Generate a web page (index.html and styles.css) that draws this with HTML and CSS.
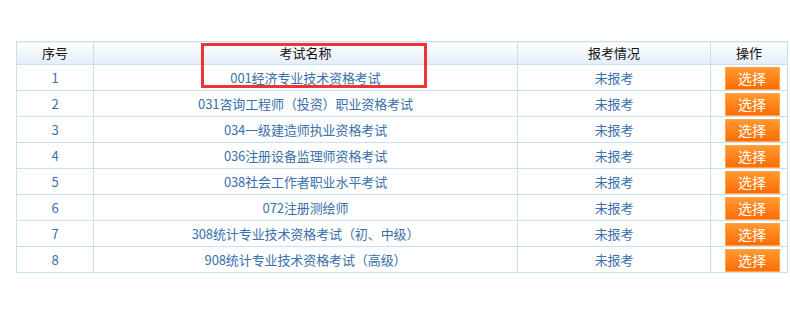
FILE: index.html
```html
<!DOCTYPE html>
<html lang="zh-CN">
<head>
<meta charset="utf-8">
<title>考试列表</title>
<link rel="stylesheet" href="styles.css">
</head>
<body>
<div class="wrap">
  <table class="exam-table">
    <colgroup>
      <col class="c1"><col class="c2"><col class="c3"><col class="c4">
    </colgroup>
    <thead>
      <tr><th>序号</th><th>考试名称</th><th>报考情况</th><th>操作</th></tr>
    </thead>
    <tbody>
      <tr><td>1</td><td>001经济专业技术资格考试</td><td>未报考</td><td class="act"><span class="btn">选择</span></td></tr>
      <tr><td>2</td><td>031咨询工程师（投资）职业资格考试</td><td>未报考</td><td class="act"><span class="btn">选择</span></td></tr>
      <tr><td>3</td><td>034一级建造师执业资格考试</td><td>未报考</td><td class="act"><span class="btn">选择</span></td></tr>
      <tr><td>4</td><td>036注册设备监理师资格考试</td><td>未报考</td><td class="act"><span class="btn">选择</span></td></tr>
      <tr><td>5</td><td>038社会工作者职业水平考试</td><td>未报考</td><td class="act"><span class="btn">选择</span></td></tr>
      <tr><td>6</td><td>072注册测绘师</td><td>未报考</td><td class="act"><span class="btn">选择</span></td></tr>
      <tr><td>7</td><td>308统计专业技术资格考试（初、中级）</td><td>未报考</td><td class="act"><span class="btn">选择</span></td></tr>
      <tr><td>8</td><td>908统计专业技术资格考试（高级）</td><td>未报考</td><td class="act"><span class="btn">选择</span></td></tr>
    </tbody>
  </table>
  <div class="highlight"></div>
</div>
</body>
</html>
```
FILE: styles.css
```css
html, body {
  margin: 0;
  padding: 0;
  background: #ffffff;
}
body {
  font-family: "Noto Sans CJK SC", "Noto Sans", sans-serif;
  font-size: 13px;
}
.wrap {
  position: relative;
  padding: 41px 0 0 16px;
}
.exam-table {
  border-collapse: collapse;
  width: 772px;
  table-layout: fixed;
}
.c1 { width: 77px; }
.c2 { width: 424px; }
.c3 { width: 193px; }
.c4 { width: 77px; }
.exam-table th,
.exam-table td {
  border: 1px solid #c8e0f4;
  padding: 0;
  text-align: center;
  vertical-align: middle;
  line-height: 16px;
}
.exam-table th {
  height: 22px;
  font-weight: normal;
  color: #111111;
  background: linear-gradient(#ffffff, #e2edf9);
}
.exam-table td {
  height: 25px;
  color: #3a70ab;
  letter-spacing: -0.1px;
}
.exam-table td.act {
  padding-left: 6px;
}
.btn {
  display: inline-block;
  box-sizing: border-box;
  width: 55px;
  height: 23px;
  margin-top: 1px;
  line-height: 21px;
  font-size: 14px;
  letter-spacing: 0;
  color: #ffffff;
  border: 1px solid #ffa548;
  background: linear-gradient(#ff9a30, #ff6c05);
  vertical-align: middle;
}
.highlight {
  position: absolute;
  left: 201px;
  top: 43px;
  width: 220px;
  height: 39px;
  border: 3px solid #ee3535;
}
```
